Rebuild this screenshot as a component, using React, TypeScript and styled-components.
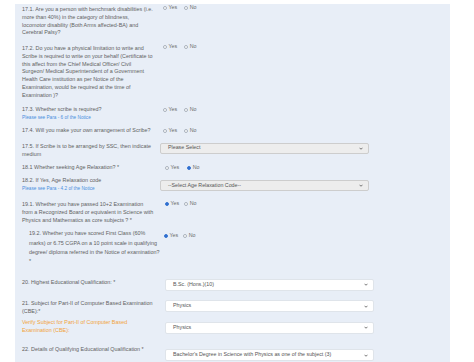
import styled, { createGlobalStyle } from "styled-components";

const GlobalStyle = createGlobalStyle`
  body {
    margin: 0;
    background: #ffffff;
    font-family: "Liberation Sans", Arial, sans-serif;
  }
`;

const Chevron = () => (
  <svg width="4" height="3" viewBox="0 0 8 6">
    <path d="M1 1.5 L4 4.5 L7 1.5" fill="none" stroke="#555" strokeWidth="1.6" />
  </svg>
);

const Radio = ({ checked, label }: { checked?: boolean; label: string }) => (
  <RadioItem>
    <RadioDot $checked={checked} />
    {label}
  </RadioItem>
);

const Dropdown = ({ value, plain, h }: { value: string; plain?: boolean; h: number }) => (
  <SelectBox $plain={plain} $h={h}>
    <span>{value}</span>
    <Chevron />
  </SelectBox>
);

const App = () => {
  return (
    <>
      <GlobalStyle />
      <Page>
        <Panel>
          <Row $top={2.1}>
            <Label $w={132}>
              17.1. Are you a person with benchmark disabilities (i.e. more than 40%) in the category of blindness,
              locomotor disability (Both Arms affected-BA) and Cerebral Palsy?
            </Label>
            <Radios $dy={-2}>
              <Radio label="Yes" />
              <Radio label="No" />
            </Radios>
          </Row>
          <Row $top={7.8}>
            <Label $w={132}>
              17.2. Do you have a physical limitation to write and Scribe is required to write on your behalf
              (Certificate to this affect from the Chief Medical Officer/ Civil Surgeon/ Medical Superintendent of a
              Government Health Care institution as per Notice of the Examination, would be required at the time of
              Examination )?
            </Label>
            <Radios $dy={-2}>
              <Radio label="Yes" />
              <Radio label="No" />
            </Radios>
          </Row>
          <Row $top={6.4}>
            <Label $w={132}>
              17.3. Whether scribe is required?
              <Note>Please see Para - 6 of the Notice</Note>
            </Label>
            <Radios>
              <Radio label="Yes" />
              <Radio label="No" />
            </Radios>
          </Row>
          <Row $top={6.2}>
            <Label $w={132}>17.4. Will you make your own arrangement of Scribe?</Label>
            <Radios>
              <Radio label="Yes" />
              <Radio label="No" />
            </Radios>
          </Row>
          <Row $top={8.2}>
            <Label $w={132}>17.5. If Scribe is to be arranged by SSC, then indicate medium</Label>
            <Control $dy={0} $left={-1}>
              <Dropdown value="Please Select" h={10.5} />
            </Control>
          </Row>
          <Row $top={5.4}>
            <Label $w={132}>18.1 Whether seeking Age Relaxation? *</Label>
            <Radios $left={5} $gap={8}>
              <Radio label="Yes" />
              <Radio label="No" checked />
            </Radios>
          </Row>
          <Row $top={5.2}>
            <Label $w={132}>
              18.2. If Yes, Age Relaxation code
              <Note>Please see Para - 4.2 of the Notice</Note>
            </Label>
            <Control $dy={3} $left={-1}>
              <Dropdown value="--Select Age Relaxation Code--" h={11} />
            </Control>
          </Row>
          <Row $top={9.2}>
            <Label $w={136}>
              19.1. Whether you have passed 10+2 Examination
              <br />
              from a Recognized Board or equivalent in Science with Physics and Mathematics as core subjects ? *
            </Label>
            <Radios $left={5} $gap={5} $dy={-1}>
              <Radio label="Yes" checked />
              <Radio label="No" />
            </Radios>
          </Row>
          <Row $top={4.8} $indent={7} $lh={9.4}>
            <Label $w={133}>
              19.2. Whether you have scored First Class (60% marks) or 6.75 CGPA on a 10 point scale in qualifying
              degree/ diploma referred in the Notice of examination? *
            </Label>
            <Radios $left={4} $gap={5} $dy={3}>
              <Radio label="Yes" checked />
              <Radio label="No" />
            </Radios>
          </Row>
          <Row $top={12.2}>
            <Label $w={132}>20. Highest Educational Qualification: *</Label>
            <Control $dy={0} $left={5}>
              <Dropdown value="B.Sc. (Hons.)(10)" plain h={12} />
            </Control>
          </Row>
          <Row $top={9.1}>
            <Label $w={132}>21. Subject for Part-II of Computer Based Examination (CBE):*</Label>
            <Control $dy={0} $left={5}>
              <Dropdown value="Physics" plain h={12} />
            </Control>
          </Row>
          <Row $top={3.4}>
            <Label $w={132} $accent>
              Verify Subject for Part-II of Computer Based Examination (CBE):
            </Label>
            <Control $dy={3} $left={5}>
              <Dropdown value="Physics" plain h={11.5} />
            </Control>
          </Row>
          <Row $top={11.4}>
            <Label $w={132}>22. Details of Qualifying Educational Qualification *</Label>
            <Control $dy={3} $left={5}>
              <Dropdown value="Bachelor's Degree in Science with Physics as one of the subject (3)" plain h={12} />
            </Control>
          </Row>
        </Panel>
      </Page>
    </>
  );
};

const Page = styled.div`
  padding-top: 4px;
  height: 362px;
  overflow: hidden;
  box-sizing: border-box;
`;

const Panel = styled.div`
  margin-left: 15px;
  width: 435px;
  height: 100%;
  background: #e8eef7;
  padding: 0 0 0 7px;
  box-sizing: border-box;
  overflow: hidden;
`;

const Row = styled.div<{ $top: number; $indent?: number; $lh?: number }>`
  display: grid;
  grid-template-columns: ${(p) => 138 - (p.$indent ?? 0)}px 1fr;
  align-items: start;
  margin-top: ${(p) => p.$top}px;
  padding-left: ${(p) => p.$indent ?? 0}px;
  font-size: 5.42px;
  line-height: ${(p) => p.$lh ?? 7.8}px;
  color: #5f5f5f;
`;

const Label = styled.div<{ $w: number; $accent?: boolean }>`
  width: ${(p) => p.$w}px;
  color: ${(p) => (p.$accent ? "#f2a33a" : "#5f5f5f")};
`;

const Note = styled.div`
  color: #4a8fde;
  font-size: 4.7px;
  line-height: 7px;
`;

const Radios = styled.div<{ $gap?: number; $left?: number; $dy?: number }>`
  display: flex;
  align-items: center;
  gap: ${(p) => p.$gap ?? 7}px;
  padding-left: ${(p) => p.$left ?? 3}px;
  margin-top: ${(p) => p.$dy ?? 0}px;
  font-size: 5.3px;
  line-height: 7.8px;
`;

const RadioItem = styled.span`
  display: inline-flex;
  align-items: center;
  gap: 1.5px;
  color: #6a6a6a;
`;

const RadioDot = styled.span<{ $checked?: boolean }>`
  width: 4px;
  height: 4px;
  border-radius: 50%;
  box-sizing: border-box;
  border: 0.5px solid ${(p) => (p.$checked ? "#2f6fd0" : "#a9b1bc")};
  background: ${(p) => (p.$checked ? "radial-gradient(circle, #2f6fd0 50%, #ffffff 60%)" : "#ffffff")};
`;

const Control = styled.div<{ $left?: number; $dy: number }>`
  padding-left: ${(p) => p.$left ?? 0}px;
  margin-top: ${(p) => p.$dy}px;
`;

const SelectBox = styled.div<{ $plain?: boolean; $h: number }>`
  display: flex;
  align-items: center;
  justify-content: space-between;
  width: 209px;
  height: ${(p) => p.$h}px;
  box-sizing: border-box;
  padding: 0 5px 0 7px;
  background: ${(p) => (p.$plain ? "#ffffff" : "#ededed")};
  border: 0.5px solid ${(p) => (p.$plain ? "#dfe4ea" : "#cdcdcd")};
  border-radius: 2px;
  font-size: 5.3px;
  color: #555;
`;

export default App;
